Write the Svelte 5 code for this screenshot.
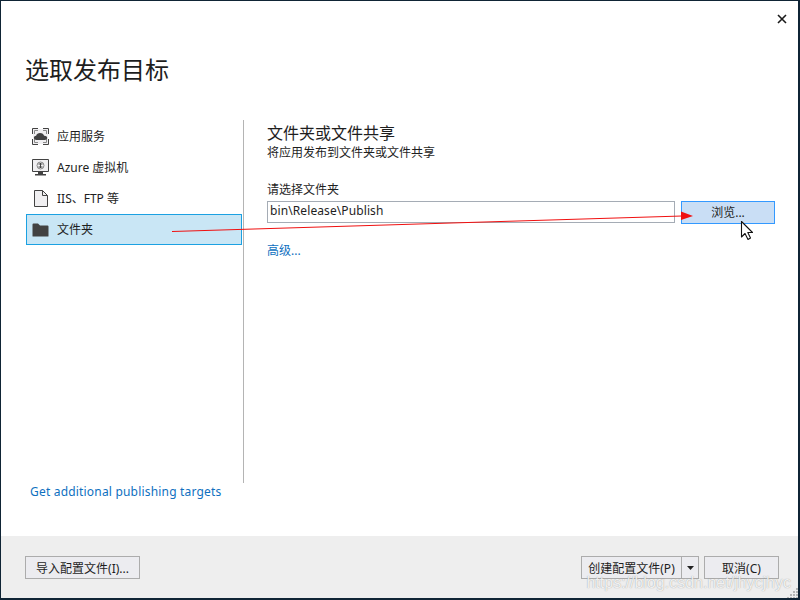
<script>
  const targets = [
    { id: 'app', label: '应用服务' },
    { id: 'vm', label: 'Azure 虚拟机' },
    { id: 'iis', label: 'IIS、FTP 等' },
    { id: 'folder', label: '文件夹', selected: true }
  ];
  const grip = [[796, 588], [793, 591], [796, 591], [790, 594], [793, 594], [796, 594], [787, 597], [790, 597], [793, 597], [796, 597]];
</script>

<div class="window">
  <div class="close-row">
    <svg class="close" width="10" height="10" viewBox="0 0 10 10" aria-hidden="true"><path d="M1 1 L9 9 M9 1 L1 9" stroke="#1a1a1a" stroke-width="1.600" fill="none"/></svg>
  </div>
  <h1>选取发布目标</h1>

  <div class="main">
    <div class="side">
      <ul class="list">
        {#each targets as t}
          <li class="item" class:selected={t.selected}>
            <span class="icon">
              {#if t.id === 'app'}
                <svg width="17" height="17" viewBox="0 0 17 17" aria-hidden="true">
                  <path d="M1 1h15v15H1z" fill="#f0eff1"/>
                  <path d="M.5 6V.5H6M11 .5h5.500V6M16.500 11v5.500H11M6 16.500H.5V11" fill="none" stroke="#424242"/>
                  <path d="M2.500 6V2.500H6M11 2.500h3.500V6M14.500 11v3.500H11M6 14.500H2.500V11" fill="none" stroke="#8a8a8a"/>
                  <path d="M4.500 12c-1.600 0-2.600-.9-2.600-2.200 0-1.200 1-2.100 2.200-2.100C4.700 6 6 5 8 5c2.300 0 3.700 1.200 4.100 2.700 1.700-.1 3.100.8 3.100 2.100 0 1.300-1 2.200-2.400 2.200z" fill="#424242"/>
                </svg>
              {:else if t.id === 'vm'}
                <svg width="17" height="17" viewBox="0 0 17 17" aria-hidden="true">
                  <path d="M.5.500h16v12H.5z" fill="#f0eff1" stroke="#424242"/>
                  <path d="M6 13h5v2h3v1.500H3V15h3z" fill="#424242"/>
                  <circle cx="8.500" cy="6.500" r="3.500" fill="none" stroke="#8a8a8a"/>
                  <path d="M6.500 5h4M6.500 8h4M8.500 4v5" stroke="#424242" fill="none"/>
                </svg>
              {:else if t.id === 'iis'}
                <svg width="14" height="17" viewBox="0 0 14 17" aria-hidden="true">
                  <path d="M.5.500h8l5 5v11H.5z" fill="#f0eff1" stroke="#424242"/>
                  <path d="M8.500.500v5h5" fill="none" stroke="#424242"/>
                </svg>
              {:else}
                <svg width="17" height="14" viewBox="0 0 17 14" aria-hidden="true">
                  <path d="M.5 1.500A1 1 0 0 1 1.500.500h4.500l2 2h7.500a1 1 0 0 1 1 1v9.500a.5.500 0 0 1-.5.500H1a.5.500 0 0 1-.5-.5z" fill="#424242"/>
                </svg>
              {/if}
            </span>
            <span>{t.label}</span>
          </li>
        {/each}
      </ul>
      <a class="link more" href="#more">Get additional publishing targets</a>
    </div>

    <div class="content">
      <h2>文件夹或文件共享</h2>
      <p class="sub">将应用发布到文件夹或文件共享</p>
      <label class="field-label" for="path">请选择文件夹</label>
      <div class="field-row">
        <input id="path" class="path" value="bin\Release\Publish" />
        <button class="browse">浏览...</button>
      </div>
      <a class="link advanced" href="#adv">高级...</a>
    </div>
  </div>

  <div class="footer">
    <button class="btn import">导入配置文件(I)...</button>
    <div class="right">
      <div class="split">
        <button class="split-main">创建配置文件(P)</button>
        <button class="split-arrow" aria-label="more">
          <svg width="7" height="4" viewBox="0 0 7 4" aria-hidden="true"><path d="M0 0h7L3.500 4z" fill="#222"/></svg>
        </button>
      </div>
      <button class="btn cancel">取消(C)</button>
    </div>
  </div>

  <svg class="arrow" width="800" height="600" viewBox="0 0 800 600" aria-hidden="true">
    <path d="M172 231.500 L682 216" stroke="#f01010" stroke-width="1" fill="none"/>
    <path d="M681 211.500 L693 216 L681 220 Z" fill="#f01010"/>
    <path d="M741.500 221.500 V237 L745 233.500 L748 239.500 L750.500 238 L747.800 232.500 L752.500 232.500 Z" fill="#fff" stroke="#111" stroke-width="1.100" stroke-linejoin="round"/>
    {#each grip as [x, y]}
      <rect {x} {y} width="2" height="2" fill="#b5b5b5"/>
    {/each}
  </svg>
  <span class="mark">https://blog.csdn.net/jhycjhyc</span>
</div>

<style>
  :global(body) {
    margin: 0;
  }
  .window {
    position: relative;
    box-sizing: border-box;
    width: 800px;
    height: 600px;
    display: flex;
    flex-direction: column;
    background: #fff;
    border: 1px solid #0f2435;
    border-width: 1px 2px 2px 1px;
    overflow: hidden;
    font-family: "Noto Sans", "Noto Sans CJK SC", sans-serif;
    font-size: 12px;
    color: #1e1e1e;
  }
  .close-row {
    height: 11px;
    padding: 13px 11px 0 0;
    display: flex;
    justify-content: flex-end;
  }
  .close {
    display: block;
  }
  h1 {
    margin: 27px 0 0 24px;
    height: 42px;
    font-size: 24px;
    font-weight: 400;
    line-height: 36px;
    color: #1e1e1e;
  }
  .main {
    flex: 1;
    display: flex;
    padding: 26px 0 0 25px;
    min-height: 0;
  }
  .side {
    box-sizing: border-box;
    width: 218px;
    height: 363px;
    border-right: 1px solid #b4b4b4;
    padding-right: 1px;
    display: flex;
    flex-direction: column;
  }
  .list {
    list-style: none;
    margin: 0;
    padding: 1px 0 0;
    flex: 1;
  }
  .item {
    box-sizing: border-box;
    height: 31px;
    display: flex;
    align-items: center;
    gap: 8px;
    padding: 0 5px;
    border: 1px solid transparent;
    line-height: 18px;
  }
  .item.selected {
    background: #c9e6f5;
    border-color: #1ba1e2;
  }
  .icon {
    width: 17px;
    height: 17px;
    display: flex;
    align-items: center;
    justify-content: center;
  }
  .link {
    color: #0e70c0;
    text-decoration: none;
  }
  .more {
    margin: 0 0 -18px 4px;
    font-size: 12px;
    line-height: 18px;
    letter-spacing: 0.19px;
  }
  .content {
    padding: 1px 0 0 23px;
    flex: 1;
    display: flex;
    flex-direction: column;
    align-items: flex-start;
  }
  h2 {
    margin: 0;
    font-size: 16px;
    font-weight: 400;
    line-height: 24px;
  }
  .sub {
    margin: 0;
    line-height: 16px;
  }
  .field-label {
    margin-top: 21px;
    line-height: 16px;
  }
  .field-row {
    margin-top: 3px;
    display: flex;
    gap: 6px;
  }
  .path {
    box-sizing: border-box;
    width: 408px;
    height: 22px;
    padding: 0 2px 4px;
    border: 1px solid #a5acb5;
    border-radius: 0;
    outline: none;
    font: inherit;
    letter-spacing: 0.1px;
    color: #1e1e1e;
    background: #fff;
  }
  .browse {
    box-sizing: border-box;
    width: 94px;
    height: 23px;
    padding: 0 0 2px;
    border: 1px solid #3399ff;
    background: #c9def5;
    font: inherit;
    color: #1e1e1e;
  }
  .advanced {
    margin-top: 18px;
    line-height: 18px;
  }
  .footer {
    box-sizing: border-box;
    height: 62px;
    flex: none;
    background: #eeeeee;
    display: flex;
    justify-content: space-between;
    padding: 20px 19px 0 24px;
    align-items: flex-start;
  }
  .btn,
  .split-main,
  .split-arrow {
    box-sizing: border-box;
    height: 23px;
    padding: 0;
    border: 1px solid #acacac;
    background: #ececf0;
    font: inherit;
    color: #1e1e1e;
  }
  .import {
    width: 115px;
  }
  .right {
    display: flex;
    gap: 5px;
  }
  .split {
    display: flex;
  }
  .split-main {
    width: 101px;
  }
  .split-arrow {
    width: 18px;
    margin-left: -1px;
    display: flex;
    align-items: center;
    justify-content: center;
  }
  .cancel {
    width: 75px;
  }
  .arrow {
    position: absolute;
    left: -1px;
    top: -1px;
    pointer-events: none;
  }
  .mark {
    position: absolute;
    right: 7px;
    bottom: 9px;
    font-family: "Liberation Sans", sans-serif;
    font-size: 16px;
    line-height: 12px;
    color: rgba(255, 255, 255, 0.85);
    text-shadow: 0 0 1px rgba(110, 110, 110, 0.7);
    pointer-events: none;
  }
</style>
